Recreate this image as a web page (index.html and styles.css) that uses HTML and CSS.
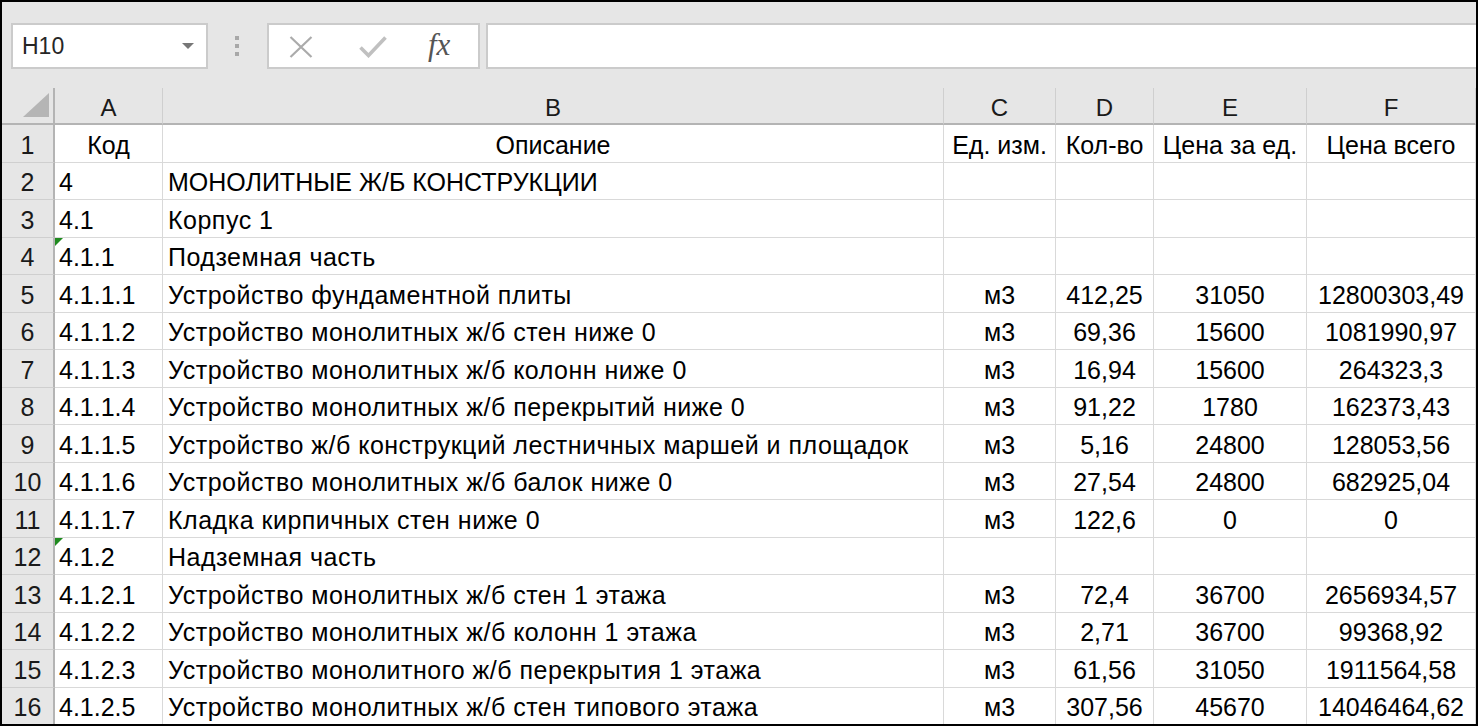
FILE: index.html
```html
<!DOCTYPE html>
<html lang="ru">
<head>
<meta charset="utf-8">
<title>Смета</title>
<link rel="stylesheet" href="styles.css">
</head>
<body>
<div class="frame">
  <div class="toolbar">
    <div class="namebox">
      <span class="nb-text">H10</span>
      <svg class="nb-arrow" width="12" height="6" viewBox="0 0 12 6"><path d="M0 0H12L6 6Z" fill="#777"/></svg>
    </div>
    <div class="grip"><i></i><i></i><i></i></div>
    <div class="fnbox">
      <svg class="ico-x" width="24" height="22" viewBox="0 0 24 22"><path d="M1.5 1 L22.5 21 M22.5 1 L1.5 21" stroke="#ababab" stroke-width="2.2" fill="none"/></svg>
      <svg class="ico-check" width="28" height="22" viewBox="0 0 28 22"><path d="M1.5 11.5 L9.5 19.5 L26.5 1.5" stroke="#c0c0c0" stroke-width="3.6" fill="none"/></svg>
      <span class="fx">fx</span>
    </div>
    <div class="formula"></div>
  </div>
  <div class="sheet">
    <div class="corner"><span class="tri"></span></div>
    <div class="ch">A</div><div class="ch">B</div><div class="ch">C</div><div class="ch">D</div><div class="ch">E</div><div class="ch">F</div>

    <div class="rh">1</div><div class="c m">Код</div><div class="c m">Описание</div><div class="c m">Ед. изм.</div><div class="c m">Кол-во</div><div class="c m">Цена за ед.</div><div class="c m">Цена всего</div>
    <div class="rh">2</div><div class="c a">4</div><div class="c b caps">МОНОЛИТНЫЕ Ж/Б КОНСТРУКЦИИ</div><div class="c"></div><div class="c"></div><div class="c"></div><div class="c"></div>
    <div class="rh">3</div><div class="c a">4.1</div><div class="c b">Корпус 1</div><div class="c"></div><div class="c"></div><div class="c"></div><div class="c"></div>
    <div class="rh">4</div><div class="c a flag">4.1.1</div><div class="c b">Подземная часть</div><div class="c"></div><div class="c"></div><div class="c"></div><div class="c"></div>
    <div class="rh">5</div><div class="c a">4.1.1.1</div><div class="c b">Устройство фундаментной плиты</div><div class="c m">м3</div><div class="c m">412,25</div><div class="c m">31050</div><div class="c m">12800303,49</div>
    <div class="rh">6</div><div class="c a">4.1.1.2</div><div class="c b">Устройство монолитных ж/б стен ниже 0</div><div class="c m">м3</div><div class="c m">69,36</div><div class="c m">15600</div><div class="c m">1081990,97</div>
    <div class="rh">7</div><div class="c a">4.1.1.3</div><div class="c b">Устройство монолитных ж/б колонн ниже 0</div><div class="c m">м3</div><div class="c m">16,94</div><div class="c m">15600</div><div class="c m">264323,3</div>
    <div class="rh">8</div><div class="c a">4.1.1.4</div><div class="c b">Устройство монолитных ж/б перекрытий ниже 0</div><div class="c m">м3</div><div class="c m">91,22</div><div class="c m">1780</div><div class="c m">162373,43</div>
    <div class="rh">9</div><div class="c a">4.1.1.5</div><div class="c b">Устройство ж/б конструкций лестничных маршей и площадок</div><div class="c m">м3</div><div class="c m">5,16</div><div class="c m">24800</div><div class="c m">128053,56</div>
    <div class="rh">10</div><div class="c a">4.1.1.6</div><div class="c b">Устройство монолитных ж/б балок ниже 0</div><div class="c m">м3</div><div class="c m">27,54</div><div class="c m">24800</div><div class="c m">682925,04</div>
    <div class="rh">11</div><div class="c a">4.1.1.7</div><div class="c b">Кладка кирпичных стен ниже 0</div><div class="c m">м3</div><div class="c m">122,6</div><div class="c m">0</div><div class="c m">0</div>
    <div class="rh">12</div><div class="c a flag">4.1.2</div><div class="c b">Надземная часть</div><div class="c"></div><div class="c"></div><div class="c"></div><div class="c"></div>
    <div class="rh">13</div><div class="c a">4.1.2.1</div><div class="c b">Устройство монолитных ж/б стен 1 этажа</div><div class="c m">м3</div><div class="c m">72,4</div><div class="c m">36700</div><div class="c m">2656934,57</div>
    <div class="rh">14</div><div class="c a">4.1.2.2</div><div class="c b">Устройство монолитных ж/б колонн 1 этажа</div><div class="c m">м3</div><div class="c m">2,71</div><div class="c m">36700</div><div class="c m">99368,92</div>
    <div class="rh">15</div><div class="c a">4.1.2.3</div><div class="c b">Устройство монолитного ж/б перекрытия 1 этажа</div><div class="c m">м3</div><div class="c m">61,56</div><div class="c m">31050</div><div class="c m">1911564,58</div>
    <div class="rh">16</div><div class="c a">4.1.2.5</div><div class="c b">Устройство монолитных ж/б стен типового этажа</div><div class="c m">м3</div><div class="c m">307,56</div><div class="c m">45670</div><div class="c m">14046464,62</div>
  </div>
</div>
</body>
</html>
```

FILE: styles.css
```css
* { box-sizing: border-box; }
html, body { margin: 0; padding: 0; }
body { background: #fff; }

.frame {
  width: 1478px;
  height: 726px;
  border: 2px solid #000;
  overflow: hidden;
  background: #e6e6e6;
  font-family: "Liberation Sans", Arial, sans-serif;
  color: #000;
}

/* ---- toolbar ---- */
.toolbar {
  height: 86px;
  display: flex;
  align-items: flex-start;
  padding: 21px 0 0 9px;
}
.namebox {
  width: 197px;
  height: 46px;
  background: #fff;
  border: 2px solid #cbcbcb;
  display: flex;
  align-items: center;
  justify-content: space-between;
  padding: 0 12px 0 9px;
}
.nb-text { font-size: 23px; color: #262626; padding-top: 1px; }
.nb-arrow { display: block; }
.grip {
  width: 59px;
  height: 46px;
  display: flex;
  flex-direction: column;
  align-items: center;
  justify-content: center;
  gap: 4px;
  padding-right: 2px;
}
.grip i { display: block; width: 4px; height: 4px; background: #a8a8a8; }
.fnbox {
  width: 213px;
  height: 46px;
  background: #fff;
  border: 2px solid #cbcbcb;
  display: flex;
  align-items: center;
  padding: 0 0 0 20px;
}
.ico-x { display: block; margin-top: 1px; }
.ico-check { display: block; margin-left: 46px; margin-top: 1px; }
.fx {
  font-family: "Liberation Serif", "Times New Roman", serif;
  font-style: italic;
  font-size: 31px;
  color: #555;
  margin-left: 41px;
  letter-spacing: 0;
  padding-bottom: 2px;
}
.formula {
  flex: 1;
  height: 46px;
  margin-left: 6px;
  margin-right: -4px;
  background: #fff;
  border: 2px solid #cbcbcb;
}

/* ---- sheet ---- */
.sheet {
  display: grid;
  grid-template-columns: 53px 108px 781px 112px 98px 153px 1fr;
  grid-template-rows: 37px;
  grid-auto-rows: 37.5px;
  background: #fff;
  font-size: 25px;
}
.corner {
  background: #e6e6e6;
  border-right: 2px solid #b4b4b4;
  border-bottom: 2px solid #b4b4b4;
  position: relative;
}
.tri {
  position: absolute;
  left: 21px;
  top: 5px;
  width: 0;
  height: 0;
  border-style: solid;
  border-width: 0 0 24px 26px;
  border-color: transparent transparent #b5b5b5 transparent;
}
.ch {
  background: #e6e6e6;
  border-right: 1px solid #cfcfcf;
  border-bottom: 2px solid #b4b4b4;
  display: flex;
  align-items: center;
  justify-content: center;
  padding-top: 4px;
  color: #1a1a1a;
  font-size: 24px;
}
.rh {
  background: #e6e6e6;
  border-right: 2px solid #b4b4b4;
  border-bottom: 1px solid #cfcfcf;
  display: flex;
  align-items: center;
  justify-content: center;
  padding-top: 4px;
  color: #1a1a1a;
}
.c {
  position: relative;
  border-right: 1px solid #d9d9d9;
  border-bottom: 1px solid #d9d9d9;
  display: flex;
  align-items: center;
  padding: 4px 0 0 0;
  white-space: nowrap;
  overflow: hidden;
}
.m { justify-content: center; }
.a { padding-left: 4px; }
.b { padding-left: 5px; letter-spacing: 0.5px; }
.b.caps { letter-spacing: 0; }
.flag::before {
  content: "";
  position: absolute;
  left: 0;
  top: 0;
  border-style: solid;
  border-width: 8px 8px 0 0;
  border-color: #1f8a1f transparent transparent transparent;
}
```
